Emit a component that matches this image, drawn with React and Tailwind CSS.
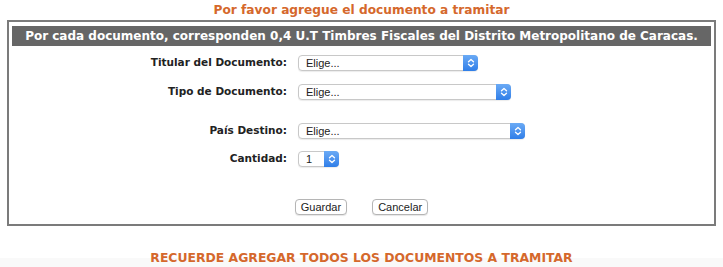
import React from 'react';

const verdana = { fontFamily: '"DejaVu Sans", Verdana, sans-serif' };
const ui = { fontFamily: '"Liberation Sans", Arial, sans-serif' };

function Arrows() {
  return (
    <svg width="8" height="10" viewBox="0 0 8 10" fill="none" stroke="white" strokeWidth="1.3" strokeLinecap="round" strokeLinejoin="round">
      <path d="M1.5 3.8 L4 1.5 L6.5 3.8" />
      <path d="M1.5 6.2 L4 8.5 L6.5 6.2" />
    </svg>
  );
}

function Select({ width, value }) {
  return (
    <div
      className="flex h-[16px] items-stretch rounded-[4px] border border-[#c8c8c8] bg-white shadow-[0_1px_1px_rgba(0,0,0,0.08)]"
      style={{ width }}
    >
      <span className="flex-1 pl-[7px] text-[11px] leading-[14px] text-[#222]" style={ui}>
        {value}
      </span>
      <span className="-my-px -mr-px flex w-[15px] items-center justify-center rounded-r-[4px] bg-gradient-to-b from-[#6aaaf5] to-[#2f7ee8]">
        <Arrows />
      </span>
    </div>
  );
}

function Row({ label, className, children }) {
  return (
    <div className={`flex items-center ${className}`}>
      <label className="w-[279px] pr-[1px] text-right text-[10.5px] font-bold text-[#222]" style={verdana}>
        {label}
      </label>
      <div className="ml-[10px]">{children}</div>
    </div>
  );
}

function Button({ children }) {
  return (
    <button
      className="h-[16px] rounded-[4px] border border-[#b5b5b5] bg-white px-[5px] text-[11px] leading-[14px] text-[#222] shadow-[0_1px_1px_rgba(0,0,0,0.1)]"
      style={ui}
    >
      {children}
    </button>
  );
}

export default function App() {
  return (
    <div className="min-h-[267px] w-[723px] bg-[linear-gradient(to_bottom,#ffffff_0,#ffffff_258px,#f9f9f9_258px)]">
      <div className="flex h-[20px] items-center justify-center">
        <h2 className="text-[12.2px] font-bold text-[#d5682c]" style={verdana}>
          Por favor agregue el documento a tramitar
        </h2>
      </div>

      <div className="mx-[7px] border-2 border-[#7b7b7b] pb-[9px]">
        <div className="mx-[3px] mt-[4px] flex h-[20px] items-center justify-center bg-[#666666]">
          <p className="whitespace-nowrap text-[12px] font-bold text-white" style={verdana}>
            Por cada documento, corresponden 0,4 U.T Timbres Fiscales del Distrito Metropolitano de Caracas.
          </p>
        </div>

        <Row label="Titular del Documento:" className="mt-[9px]">
          <Select width={180} value="Elige..." />
        </Row>
        <Row label="Tipo de Documento:" className="mt-[13px]">
          <Select width={213} value="Elige..." />
        </Row>
        <Row label="País Destino:" className="mt-[23px]">
          <Select width={227} value="Elige..." />
        </Row>
        <Row label="Cantidad:" className="mt-[12px]">
          <Select width={41} value="1" />
        </Row>

        <div className="mt-[32px] flex justify-center gap-[25px]">
          <Button>Guardar</Button>
          <Button>Cancelar</Button>
        </div>
      </div>

      <div className="mt-[23px] flex justify-center">
        <p className="text-[12.4px] font-bold text-[#d5682c]" style={verdana}>
          RECUERDE AGREGAR TODOS LOS DOCUMENTOS A TRAMITAR
        </p>
      </div>
    </div>
  );
}
